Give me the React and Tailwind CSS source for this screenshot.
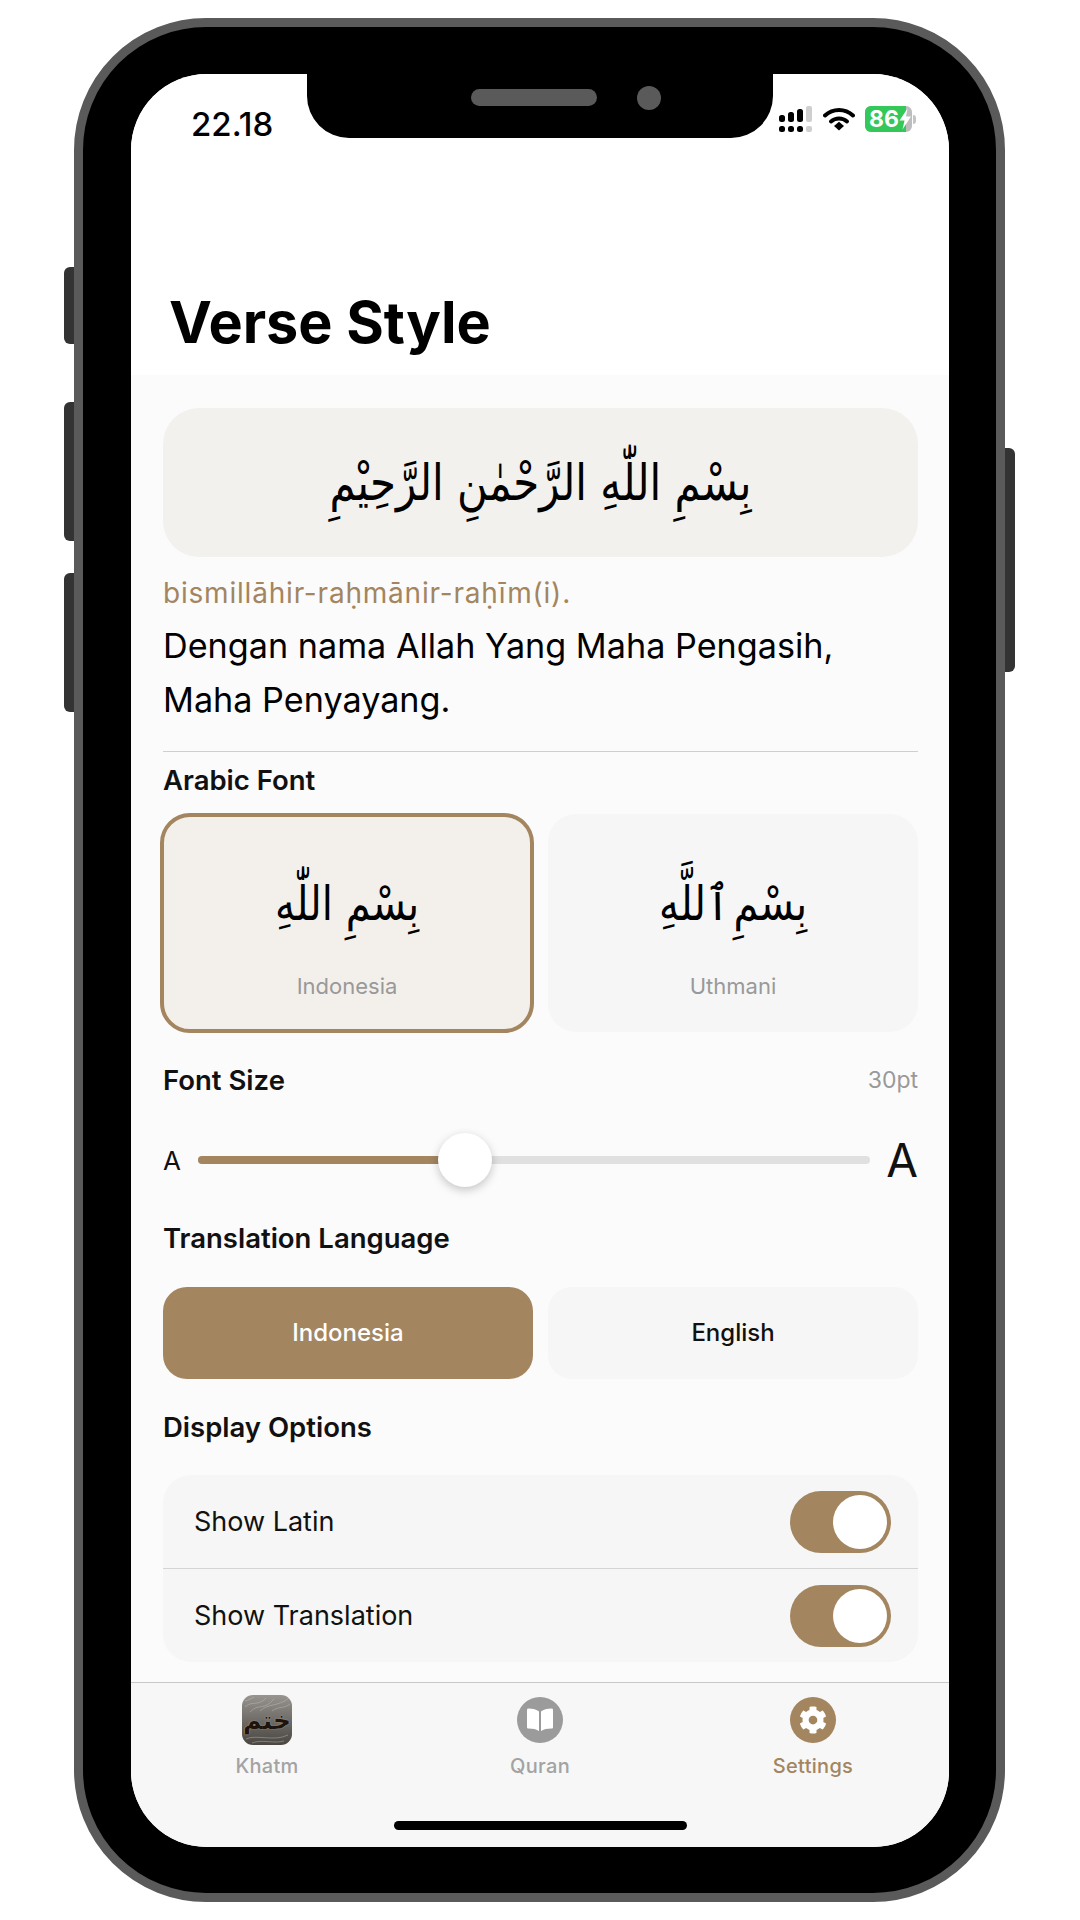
import React from 'react';
import { FaCog } from 'react-icons/fa';

const arabicFont = "font-['DejaVu_Sans',sans-serif]";

function SignalIcon() {
  return (
    <svg width="34" height="26" viewBox="0 0 34 26">
      <rect x="0" y="9" width="6" height="7" rx="2.5" fill="#000" />
      <rect x="9" y="6" width="6" height="10" rx="2.5" fill="#000" />
      <rect x="18" y="3" width="6" height="13" rx="2.5" fill="#000" />
      <rect x="27" y="0" width="6" height="16" rx="2" fill="#cfcfcf" />
      <rect x="0" y="20" width="6" height="6" rx="2.5" fill="#000" />
      <rect x="9" y="20" width="6" height="6" rx="2.5" fill="#000" />
      <rect x="18" y="20" width="6" height="6" rx="2.5" fill="#000" />
      <rect x="27" y="20" width="6" height="6" rx="2" fill="#cfcfcf" />
    </svg>
  );
}

function WifiIcon() {
  return (
    <svg width="32" height="24" viewBox="0 0 32 24">
      <path d="M2 8.5C10 1 22 1 30 8.5" fill="none" stroke="#000" strokeWidth="4" strokeLinecap="round" />
      <path d="M8 14.5C12.5 10.5 19.5 10.5 24 14.5" fill="none" stroke="#000" strokeWidth="4" strokeLinecap="round" />
      <path d="M11 19L16 14.8L21 19L16 23.5Z" fill="#000" />
    </svg>
  );
}

function BatteryIcon() {
  return (
    <div className="flex items-center">
      <div className="relative w-[47px] h-[26px] rounded-[6px] overflow-hidden bg-[#bdbdbd] flex items-center">
        <div className="absolute inset-y-0 left-0 w-[41px] bg-[#34c759]"></div>
        <span className="relative pl-[4px] text-white font-bold text-[23px] leading-none font-['Inter']">86</span>
        <svg className="relative" width="13" height="22" viewBox="0 0 13 22">
          <path d="M8.5 0.5L0.5 12.5H5.5L3.5 21.5L12 8.5H7Z" fill="#fff" />
        </svg>
      </div>
      <div className="ml-[1px] w-[3px] h-[9px] rounded-r-full bg-[#c4c4c4]"></div>
    </div>
  );
}

function SectionLabel({ children, className = '' }) {
  return <div className={`text-[27.5px] leading-[32px] font-semibold text-[#111] ${className}`}>{children}</div>;
}

function FontCard({ label, arabic, selected }) {
  return (
    <div
      className={`flex flex-col items-center ${
        selected
          ? 'w-[374px] -ml-[3px] -my-[1px] h-[220px] rounded-[30px] bg-[#f3f0ec] border-[4px] border-[#a3855f] pt-[41px]'
          : 'flex-1 h-[218px] rounded-[28px] bg-[#f6f6f6] pt-[44px]'
      }`}
    >
      <div
        className={`${arabicFont} text-[40px] leading-[90px] text-black scale-y-[1.2] ${
          selected ? '' : '[word-spacing:-8px]'
        }`}
        dir="rtl"
      >
        {arabic}
      </div>
      <div className="mt-[25px] text-[22px] leading-[26px] text-[#999]">{label}</div>
    </div>
  );
}

function ToggleRow({ label }) {
  return (
    <div className="h-[93px] flex items-center justify-between pl-[31px] pr-[27px]">
      <span className="mt-[2px] text-[27px] text-[#111]">{label}</span>
      <div className="w-[101px] h-[62px] rounded-full bg-[#a3855f] flex items-center justify-end pr-[4px]">
        <div className="w-[54px] h-[54px] rounded-full bg-white"></div>
      </div>
    </div>
  );
}

function TabItem({ label, active, children }) {
  return (
    <div className="flex flex-col items-center w-[272px]">
      <div className="h-[50px] flex items-center justify-center">{children}</div>
      <div className={`mt-[8px] text-[20px] leading-[26px] font-medium tracking-[0.3px] ${active ? 'text-[#a3855f]' : 'text-[#a3a3a3]'}`}>
        {label}
      </div>
    </div>
  );
}

function KhatmIcon() {
  return (
    <div className="relative w-[50px] h-[50px] rounded-[11px] overflow-hidden bg-gradient-to-b from-[#98948f] to-[#4a4641] flex items-center justify-center">
      <svg className="absolute inset-0" width="50" height="50" viewBox="0 0 50 50">
        <path d="M3 12C10 5 16 12 24 3M8 17C16 8 22 16 32 4M18 16C26 8 36 12 47 3M30 16C36 11 42 14 48 9M3 6C6 5 9 4 12 2M4 44C14 39 32 47 46 40M10 48C20 44 32 49 42 46" fill="none" stroke="#c9c5c0" strokeWidth="0.6" opacity="0.7" />
      </svg>
      <span className={`relative ${arabicFont} font-bold text-[25px] leading-none text-[#1f140c] [text-shadow:0_0_1px_#e5e0da]`}>ختم</span>
    </div>
  );
}

function App() {
  return (
    <div className="w-[1080px] h-[1920px] bg-white pt-[18px] pl-[74px] font-['Inter',sans-serif]">
      <div className="relative w-[931px] h-[1884px] rounded-[132px] border-[9px] border-[#5a5a5a] bg-black pt-[47px] px-[48px]">
        {/* side buttons */}
        <div className="absolute left-[-19px] top-[240px] w-[10px] h-[77px] rounded-l-[6px] bg-[#333]"></div>
        <div className="absolute left-[-19px] top-[375px] w-[10px] h-[139px] rounded-l-[6px] bg-[#333]"></div>
        <div className="absolute left-[-19px] top-[546px] w-[10px] h-[139px] rounded-l-[6px] bg-[#333]"></div>
        <div className="absolute right-[-19px] top-[421px] w-[10px] h-[224px] rounded-r-[6px] bg-[#333]"></div>

        <div className="relative w-[818px] h-[1773px] rounded-[76px] overflow-hidden bg-[#fbfbfb] flex flex-col">
          {/* notch */}
          <div className="absolute left-[176px] top-0 w-[466px] h-[64px] rounded-b-[42px] bg-black">
            <div className="absolute left-[164px] top-[15px] w-[126px] h-[17px] rounded-full bg-[#5a5a5a]"></div>
            <div className="absolute left-[330px] top-[12px] w-[24px] h-[24px] rounded-full bg-[#5a5a5a]"></div>
          </div>

          {/* header */}
          <div className="h-[301px] bg-white shrink-0 flex flex-col">
            <div className="flex items-start justify-between h-[80px] pt-[34px] pl-[60px] pr-[33px]">
              <span className="text-[33px] leading-[32px] font-medium text-black">22.18</span>
              <div className="flex items-center gap-[10px] -mt-[2px]">
                <SignalIcon />
                <WifiIcon />
                <BatteryIcon />
              </div>
            </div>
            <h1 className="mt-[133px] pl-[38px] text-[57.5px] leading-[70px] font-bold text-black">Verse Style</h1>
          </div>

          {/* content */}
          <div className="flex-1 pl-[32px] pr-[31px] pt-[33px]">
            <div className="h-[149px] rounded-[36px] bg-[#f3f1ed] flex items-center justify-center">
              <div className={`${arabicFont} text-[42px] leading-[100px] text-black scale-y-[1.2]`} dir="rtl">
                بِسْمِ اللّٰهِ الرَّحْمٰنِ الرَّحِيْمِ
              </div>
            </div>
            <div className="mt-[19px] text-[28px] leading-[34px] tracking-[0.8px] text-[#a3855f]">bismillāhir-raḥmānir-raḥīm(i).</div>
            <div className="mt-[9px] text-[34.2px] leading-[54px] text-black">
              Dengan nama Allah Yang Maha Pengasih,
              <br />
              Maha Penyayang.
            </div>
            <div className="mt-[24px] h-[1px] bg-[#cfcfcf]"></div>

            <SectionLabel className="mt-[12px]">Arabic Font</SectionLabel>
            <div className="mt-[18px] flex gap-[14px]">
              <FontCard label="Indonesia" arabic="بِسْمِ اللّٰهِ" selected />
              <FontCard label="Uthmani" arabic="بِسْمِ ٱللَّهِ" />
            </div>

            <div className="mt-[32px] flex items-center justify-between">
              <SectionLabel>Font Size</SectionLabel>
              <span className="text-[23px] leading-[32px] text-[#999]">30pt</span>
            </div>

            <div className="mt-[37px] h-[54px] flex items-center">
              <span className="w-[35px] text-[26px] text-[#111]">A</span>
              <div className="relative w-[672px] h-[8px] rounded-full bg-[#e0e0e0]">
                <div className="h-full w-[267px] rounded-full bg-[#a3855f]"></div>
                <div className="absolute left-[240px] top-[-23px] w-[54px] h-[54px] rounded-full bg-white shadow-[0_3px_10px_rgba(0,0,0,0.22)]"></div>
              </div>
              <span className="ml-auto text-[46px] leading-none text-[#111]">A</span>
            </div>

            <SectionLabel className="mt-[35px]">Translation Language</SectionLabel>
            <div className="mt-[33px] flex gap-[15px]">
              <div className="flex-1 h-[92px] rounded-[24px] bg-[#a3855f] flex items-center justify-center text-[24px] font-medium text-white">
                Indonesia
              </div>
              <div className="flex-1 h-[92px] rounded-[24px] bg-[#f6f6f6] flex items-center justify-center text-[24px] font-medium text-[#111]">
                English
              </div>
            </div>

            <SectionLabel className="mt-[32px]">Display Options</SectionLabel>
            <div className="mt-[32px] rounded-[28px] bg-[#f6f6f6]">
              <ToggleRow label="Show Latin" />
              <div className="h-[1px] bg-[#d4d4d4]"></div>
              <ToggleRow label="Show Translation" />
            </div>
          </div>

          {/* tab bar */}
          <div className="relative h-[165px] shrink-0 border-t border-[#c8c8c8] bg-[#f7f7f7] flex justify-between pt-[12px]">
            <TabItem label="Khatm">
              <KhatmIcon />
            </TabItem>
            <TabItem label="Quran">
              <div className="w-[46px] h-[46px] rounded-full bg-[#9b9b9b] flex items-center justify-center">
                <svg width="30" height="26" viewBox="0 0 30 26">
                  <path d="M14 4.5C11.5 2.5 8 1.5 3.5 1.5C2.5 1.5 2 2 2 3V20C2 21 2.5 21.5 3.5 21.5C8 21.5 11.5 22.3 14 24Z" fill="#fff" />
                  <path d="M16 4.5C18.5 2.5 22 1.5 26.5 1.5C27.5 1.5 28 2 28 3V20C28 21 27.5 21.5 26.5 21.5C22 21.5 18.5 22.3 16 24Z" fill="#fff" />
                </svg>
              </div>
            </TabItem>
            <TabItem label="Settings" active>
              <div className="w-[46px] h-[46px] rounded-full bg-[#a3855f] flex items-center justify-center">
                <FaCog size={28} color="#fff" />
              </div>
            </TabItem>
            <div className="absolute left-[263px] top-[138px] w-[293px] h-[9px] rounded-full bg-black"></div>
          </div>
        </div>
      </div>
    </div>
  );
}

export default App;
